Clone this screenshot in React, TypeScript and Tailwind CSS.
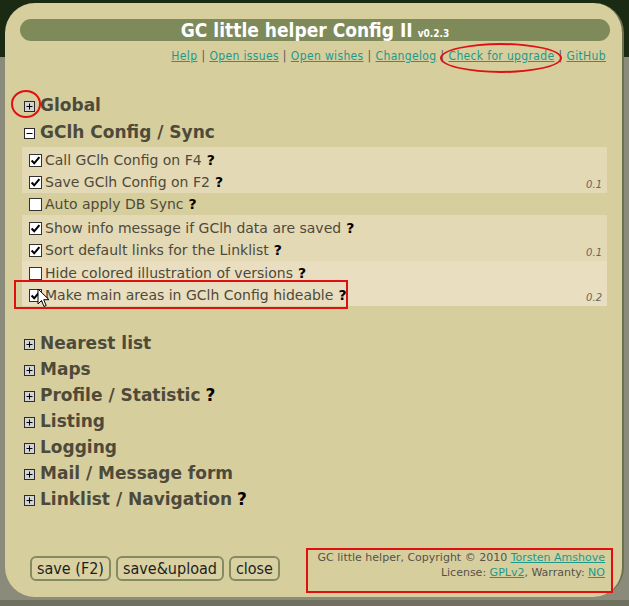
import React from "react";

const body = "font-['DejaVu_Sans',Verdana,sans-serif]";
const cond = "font-['DejaVu_Sans_Condensed','DejaVu_Sans',Tahoma,sans-serif]";

const Toggle = ({ open }: { open?: boolean }) => (
  <svg width="11" height="11" viewBox="0 0 11 11" className="shrink-0">
    <rect x="0.5" y="0.5" width="10" height="10" fill={open ? "#ffffff" : "#d4d4d4"} stroke="#2b2b2b" />
    <path d="M2.5 5.5h6" stroke="#000" />
    {!open && <path d="M5.5 2.5v6" stroke="#000" />}
  </svg>
);

const Check = ({ checked }: { checked?: boolean }) => (
  <svg width="13" height="13" viewBox="0 0 13 13" className="shrink-0">
    <rect x="0.5" y="0.5" width="12" height="12" fill="#ffffff" stroke="#333" />
    {checked && <path d="M2.6 6.6l2.6 2.7 5.2-6.2" fill="none" stroke="#000" strokeWidth="2.1" />}
  </svg>
);

const Q = () => <span className="font-bold text-black ml-[5px]">?</span>;

const Heading = ({ title, open, help }: { title: string; open?: boolean; help?: boolean }) => (
  <div className="flex items-center h-[26px] pl-[4px] gap-[5px]">
    <Toggle open={open} />
    <span className={`${body} font-bold text-[17px] text-[#4e4a3a]`}>
      {title}
      {help && <Q />}
    </span>
  </div>
);

const Row = ({ label, checked, version }: { label: string; checked?: boolean; version?: string }) => (
  <div className="flex items-center h-[22px] pl-[7px] pr-[5px] gap-[3px] relative">
    <Check checked={checked} />
    <span className={`${body} text-[14px] text-[#4e4a3a]`}>
      {label}
      <Q />
    </span>
    {version && (
      <span className={`${body} italic text-[10px] text-[#6a6658] ml-auto self-end mb-[1px]`}>{version}</span>
    )}
  </div>
);

const Sep = () => <span className="text-[#555] mx-[4px]">|</span>;
const L = ({ children }: { children: React.ReactNode }) => (
  <span className="text-[#1b9a8c] underline">{children}</span>
);

export default function App() {
  return (
    <div className="relative w-[629px] h-[606px] overflow-hidden bg-[linear-gradient(to_bottom,#1b2a13_0px,#1b2a13_57px,#8a8b7a_57px,#8a8b7a_600px,#6f705f_600px)]">
      <div className="ml-[5px] mt-[3px] w-[619px] h-[594px] rounded-[30px] bg-[#d7ce9e] border-r-2 border-[#6c7150] pt-[16px] pl-[15px] pr-[12px] pb-[16px] flex flex-col">
        <div className="h-[22px] rounded-full bg-[#7f8a5a] flex items-center justify-center">
          <span className={`${cond} font-bold text-white text-[19px] leading-none`}>GC little helper Config II</span>
          <span className={`${cond} font-bold text-white text-[10px] ml-[5px] mt-[6px]`}>v0.2.3</span>
        </div>
        <div className={`${cond} text-[12px] tracking-[0.35px] flex justify-end pr-[4px] mt-[8px] leading-[14px]`}>
          <L>Help</L>
          <Sep />
          <L>Open issues</L>
          <Sep />
          <L>Open wishes</L>
          <Sep />
          <L>Changelog</L>
          <Sep />
          <L>Check for upgrade</L>
          <Sep />
          <L>GitHub</L>
        </div>

        <div className="mt-[30px]">
          <Heading title="Global" />
          <div className="mt-[1px]">
            <Heading title="GClh Config / Sync" open />
          </div>
          <div className="ml-[2px] mr-[3px] mt-[1px]">
            <div className="bg-[#e4d9b5] pt-[2px]">
              <Row label="Call GClh Config on F4" checked />
              <Row label="Save GClh Config on F2" checked version="0.1" />
            </div>
            <Row label="Auto apply DB Sync" />
            <div className="bg-[#e4d9b5] pt-[2px]">
              <Row label="Show info message if GClh data are saved" checked />
              <Row label="Sort default links for the Linklist" checked version="0.1" />
            </div>
            <div className="bg-[#e9dfc0] pt-[1px]">
              <Row label="Hide colored illustration of versions" />
              <Row label="Make main areas in GClh Config hideable" checked version="0.2" />
            </div>
          </div>
          <div className="mt-[25px]">
            <Heading title="Nearest list" />
            <Heading title="Maps" />
            <Heading title="Profile / Statistic" help />
            <Heading title="Listing" />
            <Heading title="Logging" />
            <Heading title="Mail / Message form" />
            <Heading title="Linklist / Navigation" help />
          </div>
        </div>

        <div className="mt-auto flex items-end justify-between pl-[10px] pr-[5px]">
          <div className="flex gap-[5px]">
            {["save (F2)", "save&upload", "close"].map((b) => (
              <button
                key={b}
                className={`${cond} h-[25px] px-[5px] rounded-[6px] border-2 border-[#858a62] bg-[#d9d1a2] text-[16px] text-[#1e1e1e] leading-none`}
              >
                {b}
              </button>
            ))}
          </div>
          <div className={`${body} text-[11px] text-[#555248] text-right leading-[15px] mb-[1px]`}>
            <div>
              GC little helper, Copyright © 2010 <L>Torsten Amshove</L>
            </div>
            <div>
              License: <L>GPLv2</L>, Warranty: <L>NO</L>
            </div>
          </div>
        </div>
      </div>

      {/* red annotation marks */}
      <div className="absolute left-[440px] top-[43px] w-[122px] h-[30px] rounded-[50%] border-2 border-[#e01010]" />
      <div className="absolute left-[11px] top-[90px] w-[30px] h-[28px] rounded-[50%] border-2 border-[#e01010]" />
      <div className="absolute left-[14px] top-[280px] w-[334px] h-[29px] border-2 border-[#e01010]" />
      <div className="absolute left-[306px] top-[548px] w-[307px] h-[45px] border-2 border-[#e01010]" />

      {/* mouse cursor */}
      <svg className="absolute left-[37px] top-[288px]" width="13" height="20" viewBox="0 0 13 20">
        <path d="M1 1v15l3.5-3.5 2.5 6 2.2-1-2.5-5.8H12z" fill="#fff" stroke="#000" strokeWidth="1" strokeLinejoin="round" />
      </svg>
    </div>
  );
}
